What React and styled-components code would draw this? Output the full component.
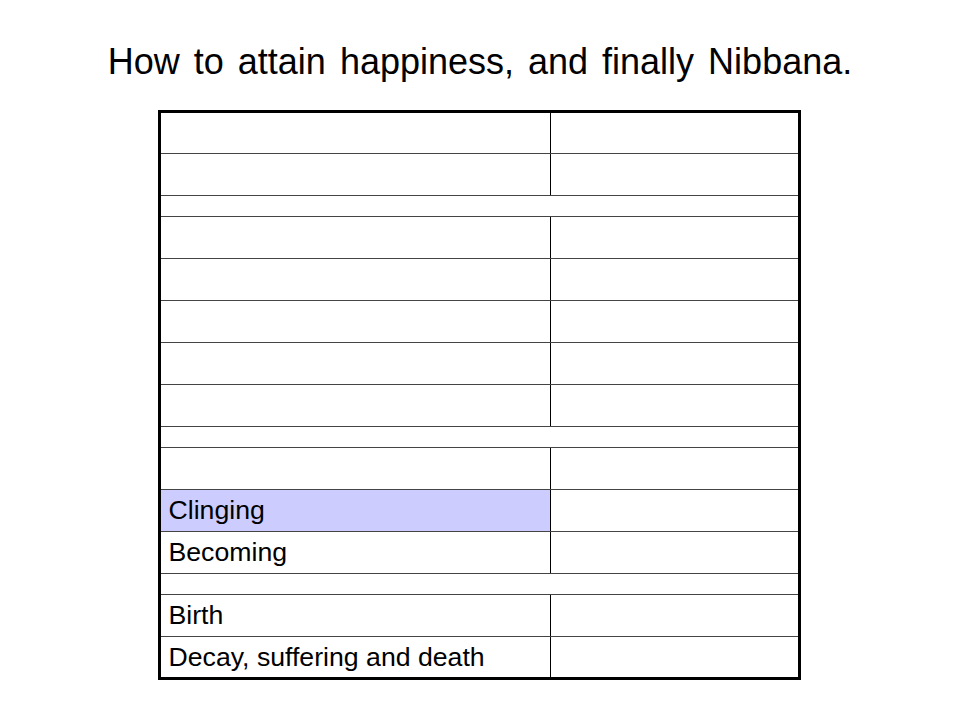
import React from "react"
import styled, { createGlobalStyle } from "styled-components"

const rows = [
  { left: "", right: "" },
  { left: "", right: "" },
  { spacer: true },
  { left: "", right: "" },
  { left: "", right: "" },
  { left: "", right: "" },
  { left: "", right: "" },
  { left: "", right: "" },
  { spacer: true },
  { left: "", right: "" },
  { left: "Clinging", right: "", highlight: true },
  { left: "Becoming", right: "" },
  { spacer: true },
  { left: "Birth", right: "" },
  { left: "Decay, suffering and death", right: "" },
]

const App = () => {
  return (
    <>
      <GlobalStyle />
      <Slide>
        <Title>How to attain happiness, and finally Nibbana.</Title>
        <Chart>
          {rows.map((row, index) =>
            row.spacer ? (
              <Spacer key={index} />
            ) : (
              <Row key={index}>
                <Cell $highlight={row.highlight}>{row.left}</Cell>
                <Cell $side>{row.right}</Cell>
              </Row>
            )
          )}
        </Chart>
      </Slide>
    </>
  )
}

const GlobalStyle = createGlobalStyle`
  body {
    margin: 0;
    background: #fff;
    font-family: "Liberation Sans", Arial, sans-serif;
  }
`

const Slide = styled.div`
  width: 960px;
  height: 720px;
  padding-top: 43px;
  box-sizing: border-box;
  display: flex;
  flex-direction: column;
  align-items: center;
`

const Title = styled.h1`
  margin: 0;
  font-size: 36px;
  font-weight: normal;
  line-height: 38px;
  word-spacing: 4px;
  color: #000;
`

const Chart = styled.div`
  margin-top: 29px;
  margin-left: -2px;
  width: 643px;
  border: 3px solid #000;
  box-sizing: border-box;
  display: flex;
  flex-direction: column;
`

const Row = styled.div`
  display: grid;
  grid-template-columns: 389px 1px 1fr;
  height: 42px;
  box-sizing: border-box;
  border-bottom: 1px solid #444;

  &::before {
    content: "";
    grid-column: 2;
    grid-row: 1;
    background: #000;
  }

  &:first-child {
    height: 41px;
  }

  &:last-child {
    height: 40px;
    border-bottom: none;
  }
`

const Spacer = styled.div`
  height: 21px;
  box-sizing: border-box;
  border-bottom: 1px solid #444;
`

const Cell = styled.div`
  grid-row: 1;
  grid-column: ${(p) => (p.$side ? 3 : 1)};
  display: flex;
  align-items: center;
  padding-left: 8px;
  font-size: 26.67px;
  color: #000;
  background: ${(p) => (p.$highlight ? "#ccccff" : "transparent")};
`

export default App
